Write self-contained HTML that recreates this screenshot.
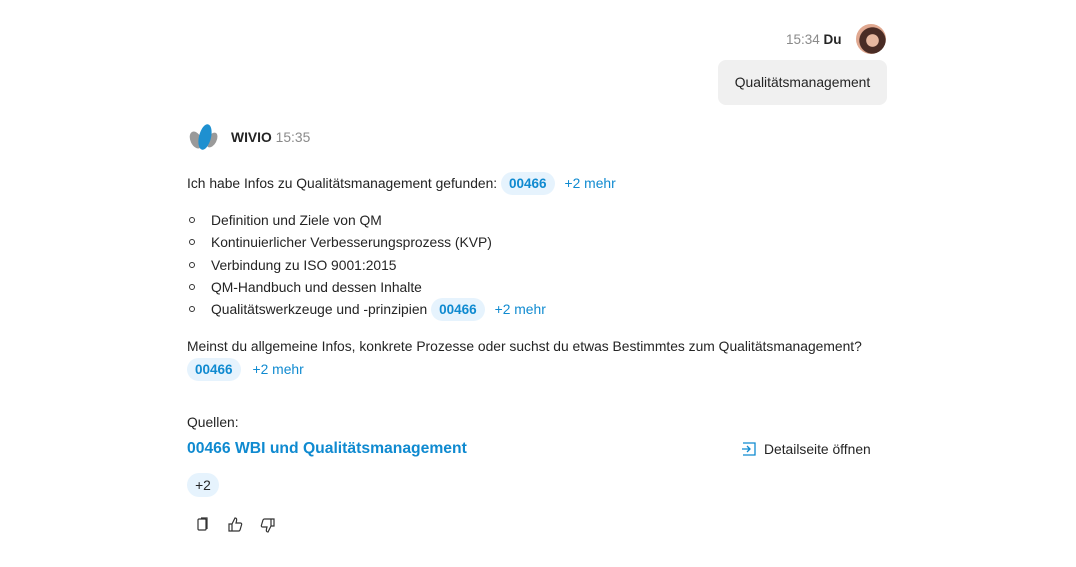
<!DOCTYPE html>
<html><head><meta charset="utf-8"><style>
body{margin:0;width:1076px;height:567px;background:#fff;font-family:"Liberation Sans",sans-serif;color:#242424;font-size:13.85px;position:relative;overflow:hidden}
.a{position:absolute;white-space:nowrap}
.chip{display:inline-block;background:#e6f3fd;color:#0f8ad0;font-weight:bold;border-radius:12px;padding:3px 8px;font-size:13.5px;line-height:17px}
.more{color:#0f8ad0;margin-left:10px}
ul{margin:0;padding:0;list-style:none}
li{position:relative;padding-left:24px;height:22.3px;line-height:22px}
li:before{content:"";position:absolute;left:2px;top:8px;width:4px;height:4px;border:1px solid #333;border-radius:50%}
</style></head><body>
<div class="a" style="left:786px;top:32px;color:#8a8a8a;font-size:13.5px">15:34 <b style="color:#242424">Du</b></div>
<div class="a" style="left:856px;top:24px;width:30px;height:30px;border-radius:50%;background:radial-gradient(circle at 55% 55%,#e8b8a0 0 26%,#4a2c25 28% 55%,#e0a890 58%)"></div>
<div class="a" style="left:718px;top:60px;width:169px;height:45px;background:#f0f0f0;border-radius:8px;line-height:45px;text-align:center">Qualitätsmanagement</div>
<svg class="a" style="left:188px;top:123px" width="32" height="28" viewBox="0 0 32 28"><ellipse cx="8" cy="17" rx="5.5" ry="9" fill="#9a9a9a" transform="rotate(-25 8 17)"/><ellipse cx="24" cy="17" rx="4.5" ry="8" fill="#9a9a9a" transform="rotate(28 24 17)"/><ellipse cx="17" cy="14" rx="6" ry="13" fill="#1e90d0" transform="rotate(14 17 14)"/></svg>
<div class="a" style="left:231px;top:129px"><b>WIVIO</b> <span style="color:#8a8a8a">15:35</span></div>
<div class="a" style="left:187px;top:172px">Ich habe Infos zu Qualitätsmanagement gefunden: <span class="chip">00466</span><span class="more">+2 mehr</span></div>
<div class="a" style="left:187px;top:209px"><ul>
<li>Definition und Ziele von QM</li>
<li>Kontinuierlicher Verbesserungsprozess (KVP)</li>
<li>Verbindung zu ISO 9001:2015</li>
<li>QM-Handbuch und dessen Inhalte</li>
<li>Qualitätswerkzeuge und -prinzipien <span class="chip">00466</span><span class="more">+2 mehr</span></li>
</ul></div>
<div class="a" style="left:187px;top:338px">Meinst du allgemeine Infos, konkrete Prozesse oder suchst du etwas Bestimmtes zum Qualitätsmanagement?</div>
<div class="a" style="left:187px;top:358px"><span class="chip">00466</span><span class="more" style="margin-left:12px">+2 mehr</span></div>
<div class="a" style="left:187px;top:414px">Quellen:</div>
<div class="a" style="left:187px;top:440px;color:#0f8ad0;font-weight:bold;font-size:15.7px">00466 WBI und Qualitätsmanagement</div>
<svg class="a" style="left:741px;top:441px" width="16" height="16" viewBox="0 0 16 16" fill="none" stroke="#0f8ad0" stroke-width="1.3"><path d="M2 2h12v12H2"/><path d="M1 8h8M6 5l3 3-3 3"/></svg>
<div class="a" style="left:764px;top:441px">Detailseite öffnen</div>
<div class="a" style="left:187px;top:473px;width:32px;height:24px;background:#e6f3fd;border-radius:12px;text-align:center;line-height:24px">+2</div>
<svg class="a" style="left:196px;top:517px" width="14" height="15" viewBox="0 0 14 15" fill="none" stroke="#333" stroke-width="1.2"><rect x="2" y="2" width="8" height="11" rx="1"/><path d="M5 1h6v11"/></svg>
<svg class="a" style="left:228px;top:517px" width="15" height="15" viewBox="0 0 15 15" fill="none" stroke="#333" stroke-width="1.2"><path d="M1 7h3v7H1zM4 7l3-6c1.5 0 2 1 1.5 3L8 6h4.5c1 0 1.5 1 1 2l-1.5 5c-.3.7-.8 1-1.5 1H4"/></svg>
<svg class="a" style="left:260px;top:518px" width="15" height="15" viewBox="0 0 15 15" fill="none" stroke="#333" stroke-width="1.2"><g transform="rotate(180 7.5 7.5)"><path d="M1 7h3v7H1zM4 7l3-6c1.5 0 2 1 1.5 3L8 6h4.5c1 0 1.5 1 1 2l-1.5 5c-.3.7-.8 1-1.5 1H4"/></g></svg>
</body></html>
